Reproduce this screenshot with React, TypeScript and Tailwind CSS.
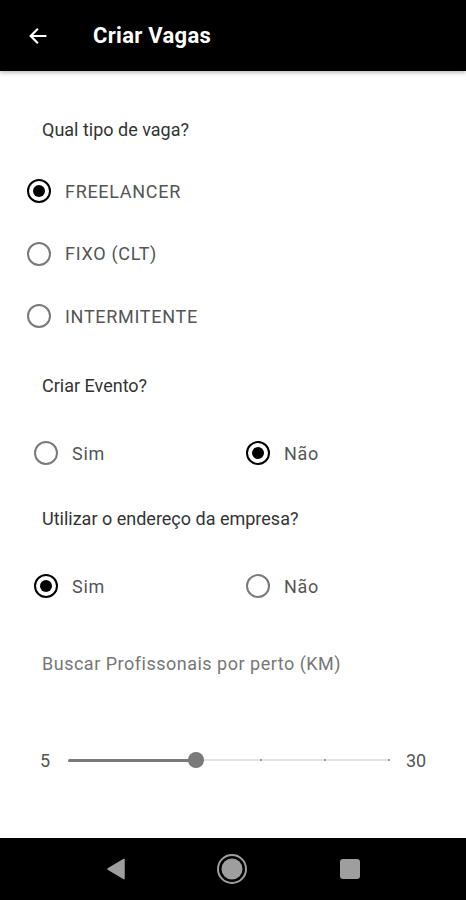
import React, { useState } from 'react';

const Radio: React.FC<{ checked: boolean }> = ({ checked }) => (
  <span
    className={`flex h-[24px] w-[24px] items-center justify-center rounded-full border-2 ${
      checked ? 'border-black' : 'border-[#7a7a7a]'
    }`}
  >
    {checked && <span className="h-[12px] w-[12px] rounded-full bg-black" />}
  </span>
);

const Option: React.FC<{ label: string; checked: boolean; onClick: () => void; className?: string }> = ({
  label,
  checked,
  onClick,
  className = '',
}) => (
  <button type="button" onClick={onClick} className={`flex h-[24px] items-center ${className}`}>
    <Radio checked={checked} />
    <span className="ml-[14px] text-[18px] tracking-[0.7px] text-[#555]">{label}</span>
  </button>
);

const App: React.FC = () => {
  const [tipo, setTipo] = useState('FREELANCER');
  const [evento, setEvento] = useState(false);
  const [endereco, setEndereco] = useState(true);
  const tipos = ['FREELANCER', 'FIXO (CLT)', 'INTERMITENTE'];

  return (
    <div className="flex h-[900px] w-[466px] flex-col bg-white" style={{ fontFamily: 'Roboto, sans-serif' }}>
      <header className="relative z-10 flex h-[71px] shrink-0 items-center bg-black shadow-[0_2px_4px_rgba(0,0,0,0.25)]">
        <svg className="ml-[27px] h-[22px] w-[22px]" viewBox="0 0 24 24" fill="none" stroke="white" strokeWidth="2.4" strokeLinecap="square">
          <path d="M20 12H5M11 5l-7 7 7 7" />
        </svg>
        <h1 className="ml-[44px] text-[22px] font-bold tracking-[0.3px] text-white">Criar Vagas</h1>
      </header>

      <main className="flex flex-1 flex-col">
        <p className="ml-[42px] mt-[47px] text-[18px] leading-[24px] text-[#333]">Qual tipo de vaga?</p>
        <div className="ml-[27px] mt-[37px] flex flex-col gap-[38.5px]">
          {tipos.map((t) => (
            <Option key={t} label={t} checked={tipo === t} onClick={() => setTipo(t)} />
          ))}
        </div>

        <p className="ml-[42px] mt-[46px] text-[18px] leading-[24px] text-[#333]">Criar Evento?</p>
        <div className="mt-[43px] flex">
          <Option label="Sim" checked={evento} onClick={() => setEvento(true)} className="ml-[34px] w-[212px]" />
          <Option label="Não" checked={!evento} onClick={() => setEvento(false)} />
        </div>

        <p className="ml-[42px] mt-[42px] text-[18px] leading-[24px] text-[#333]">Utilizar o endereço da empresa?</p>
        <div className="mt-[43px] flex">
          <Option label="Sim" checked={endereco} onClick={() => setEndereco(true)} className="ml-[34px] w-[212px]" />
          <Option label="Não" checked={!endereco} onClick={() => setEndereco(false)} />
        </div>

        <p className="ml-[42px] mt-[54px] text-[18px] leading-[24px] tracking-[0.5px] text-[#777]">
          Buscar Profissonais por perto (KM)
        </p>

        <div className="mt-[72px] flex h-[24px] items-center">
          <span className="ml-[40px] w-[10px] text-[18px] text-[#555]">5</span>
          <div className="relative ml-[18px] h-[16px] w-[322px]">
            <div className="absolute left-0 top-[6.5px] h-[3px] w-[128px] rounded-full bg-[#7a7a7a]" />
            <div className="absolute left-[128px] right-0 top-[7px] h-[2px] bg-[#e4e4e4]" />
            <div className="absolute left-[192px] top-[7px] h-[2px] w-[2px] rounded-full bg-[#8a8a8a]" />
            <div className="absolute left-[256px] top-[7px] h-[2px] w-[2px] rounded-full bg-[#8a8a8a]" />
            <div className="absolute left-[320px] top-[7px] h-[2px] w-[2px] rounded-full bg-[#8a8a8a]" />
            <div className="absolute left-[120px] top-0 h-[16px] w-[16px] rounded-full bg-[#7a7a7a]" />
          </div>
          <span className="ml-[16px] text-[18px] text-[#555]">30</span>
        </div>
      </main>

      <nav className="flex h-[62px] shrink-0 items-center bg-black">
        <svg className="ml-[106px] h-[22px] w-[20px]" viewBox="0 0 20 22">
          <path d="M18 1.5v19L2 11z" fill="#9e9e9e" stroke="#9e9e9e" strokeWidth="1.5" strokeLinejoin="round" />
        </svg>
        <svg className="ml-[90px] h-[32px] w-[32px]" viewBox="0 0 32 32">
          <circle cx="16" cy="16" r="14" fill="none" stroke="#9e9e9e" strokeWidth="2" />
          <circle cx="16" cy="16" r="10.5" fill="#9e9e9e" />
        </svg>
        <div className="ml-[92px] h-[20px] w-[20px] rounded-[3px] bg-[#9e9e9e]" />
      </nav>
    </div>
  );
};

export default App;
